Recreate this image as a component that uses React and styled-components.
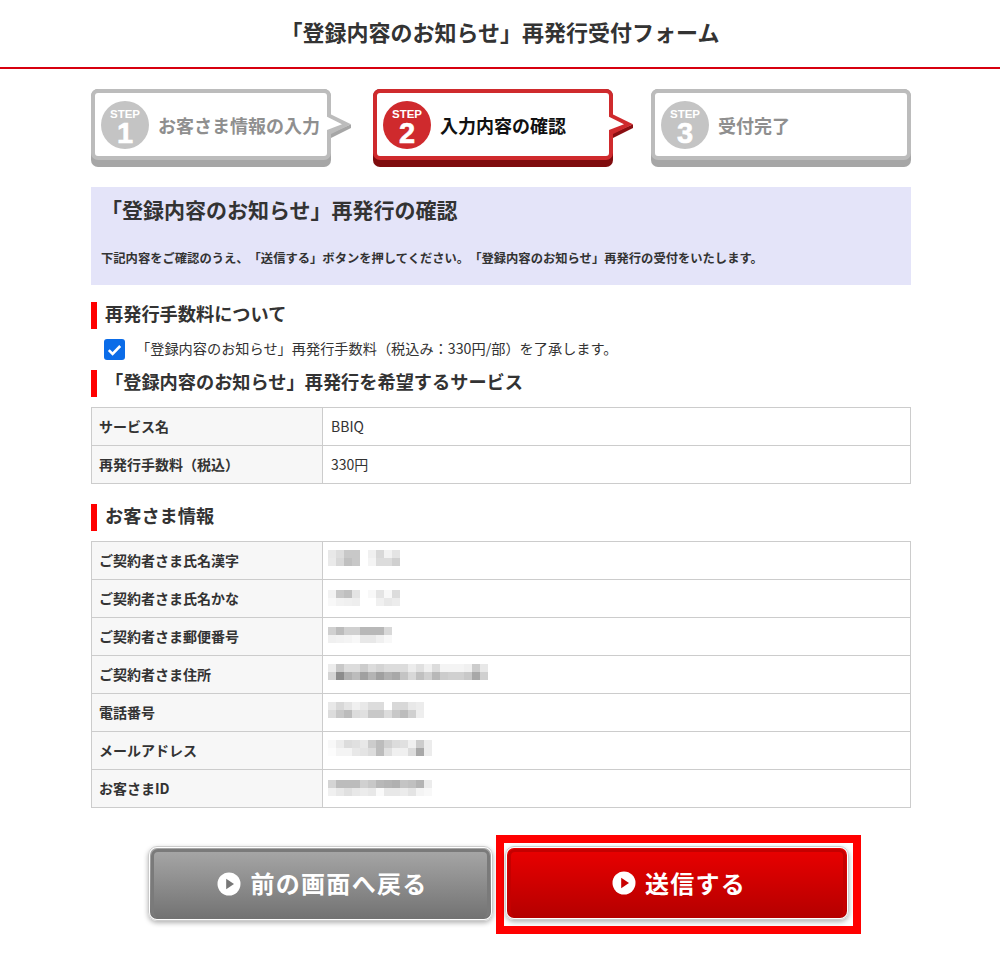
import React from "react";
import styled, { createGlobalStyle } from "styled-components";

const Global = createGlobalStyle`
  html, body { margin: 0; padding: 0; background: #fff; }
  body { font-family: "Noto Sans CJK JP", "Liberation Sans", sans-serif; color: #333; text-spacing-trim: space-all; font-feature-settings: "chws" 0; }
`;

const Header = styled.header`
  height: 67px;
  border-bottom: 2px solid #d7000f;
  display: flex;
  align-items: center;
  justify-content: center;
  padding-bottom: 0;
`;
const Title = styled.h1`
  margin: 0 0 5px;
  font-size: 22px;
  font-weight: 700;
  color: #333;
  line-height: 1;
`;
const Main = styled.main`
  width: 820px;
  margin: 20px 0 0 91px;
`;
const Steps = styled.ol`
  display: flex;
  margin: 0;
  padding: 0;
  list-style: none;
`;
const Step = styled.li`
  position: relative;
  width: ${(p) => (p.$last ? 260 : 240)}px;
  height: 78px;
  margin-left: ${(p) => p.$gap}px;
  margin-right: ${(p) => (p.$last ? 0 : 20)}px;
  box-sizing: border-box;
  background: ${(p) => (p.$active ? "#7f0c0e" : "#a6a6a6")};
  border-radius: 7px;
`;
const StepFace = styled.div`
  box-sizing: border-box;
  height: 71px;
  border: 4px solid ${(p) => (p.$active ? "#cf2a2d" : "#bcbcbc")};
  border-radius: 7px;
  background: #fff;
  display: flex;
  align-items: center;
  padding-left: 6px;
  gap: 9px;
`;
const Badge = styled.div`
  width: 48px;
  height: 48px;
  border-radius: 50%;
  background: ${(p) => (p.$active ? "#cf2a2d" : "#c4c4c4")};
  color: #fff;
  display: flex;
  flex-direction: column;
  align-items: center;
  font-family: "Liberation Sans", sans-serif;
  font-weight: 700;
  flex: none;
`;
const BadgeTop = styled.span`
  font-size: 11.5px;
  line-height: 10px;
  margin-top: 8px;
`;
const BadgeNum = styled.span`
  font-size: 29px;
  line-height: 24px;
  margin-top: 2px;
  -webkit-text-stroke: 0.6px #fff;
`;
const StepLabel = styled.span`
  font-size: 18px;
  font-weight: 700;
  color: ${(p) => (p.$active ? "#111" : "#8f8f8f")};
  line-height: 1;
  margin-top: 0;
`;
const Arrow = styled.svg`
  position: absolute;
  left: 236px;
  top: 20px;
  width: 26px;
  height: 44px;
`;
const Intro = styled.section`
  margin-top: 20px;
  height: 98px;
  box-sizing: border-box;
  background: #e4e4f9;
  padding: 10px 10px 0;
`;
const IntroTitle = styled.h2`
  margin: 0;
  font-size: 21px;
  line-height: 24px;
  font-weight: 700;
  color: #333;
`;
const IntroText = styled.p`
  margin: 28px 0 0;
  font-size: 12.3px;
  line-height: 18px;
  font-weight: 700;
  color: #333;
`;
const SectionHead = styled.h3`
  margin: ${(p) => p.$top}px 0 0;
  height: 27px;
  border-left: 6px solid #f00;
  padding-left: 8px;
  font-size: 18.2px;
  line-height: 22px;
  font-weight: 700;
  color: #333;
`;
const AgreeRow = styled.label`
  display: flex;
  align-items: center;
  height: 21px;
  margin: 10px 0 0 13px;
  color: #333;
`;
const AgreeText = styled.span`
  font-size: 14.2px;
  line-height: 17px;
  margin-bottom: 3px;
`;
const Check = styled.span`
  width: 21px;
  height: 21px;
  border-radius: 3px;
  background: #0b6ce8;
  display: flex;
  align-items: center;
  justify-content: center;
  margin-right: 11px;
  flex: none;
`;
const Table = styled.table`
  width: 820px;
  margin-top: 10px;
  border-collapse: collapse;
  table-layout: fixed;
  font-size: 14px;
`;
const Th = styled.th`
  width: 216px;
  height: 35px;
  padding: 0 7px 2px;
  background: #f7f7f7;
  border: 1px solid #ccc;
  text-align: left;
  font-weight: 700;
  color: #333;
`;
const Td = styled.td`
  height: 35px;
  padding: 0 8px 2px;
  border: 1px solid #ccc;
  color: #333;
  vertical-align: middle;
`;
const Mosaic = styled.svg`
  display: block;
  margin: 0 0 -2px -3px;
`;
const Buttons = styled.div`
  display: flex;
  align-items: flex-start;
  margin-top: 27px;
  margin-left: 57px;
`;
const BackSlot = styled.div`
  padding-top: 11px;
`;
const Button = styled.button`
  box-sizing: border-box;
  width: ${(p) => p.$w}px;
  height: ${(p) => p.$h}px;
  border: 2px solid #fff;
  outline: 1px solid #ccc;
  outline-offset: -1px;
  border-radius: 9px;
  box-shadow: 0 2px 5px rgba(0, 0, 0, 0.3);
  background: ${(p) =>
    p.$red
      ? "linear-gradient(#ea0000, #b40000)"
      : "linear-gradient(#a8a8a8, #727272)"};
  display: flex;
  align-items: center;
  justify-content: center;
  gap: 9px;
  color: #fff;
  font: 700 24px "Noto Sans CJK JP", sans-serif;
  letter-spacing: 1.3px;
  padding: 0 0 0 4px;
  position: relative;
  &::before {
    content: "";
    position: absolute;
    inset: 1px;
    border: 3px solid ${(p) => (p.$red ? "#c40000" : "#7a7a7a")};
    border-bottom-width: 0;
    border-radius: 7px;
    pointer-events: none;
  }
`;
const ButtonLabel = styled.span`
  line-height: 30px;
  margin-top: -1px;
`;
const SendFrame = styled.div`
  border: 8px solid #f00;
  padding: 3px 4px 6px 1px;
  margin-left: 3px;
  background: #fff;
`;

const mosaics = [
  [1, [["e8","dd","c8","c8",0,"f0","d8","f2","e4"],["ea","d8","c0","c8",0,"f4","dc","dc","d0"]], 3],
  [2, [["f2","c8","c0","e4",0,"f8","e4","f8","dc"],["f8","f2","f0","ee",0,0,"f0","e8","ec"]], 5],
  [3, [["d0","bc","d0","d0","b8","b8","b8","d8"],["f0","f2","f4","f8","e8","e8","f0","f8"]], 4],
  [4, [["ec","c8","dc","dc","cc","dc","d4","dc","dc","dc","ec","e0","f0","dc","f4","f4","f4","f0","cc","e8"],["d4","8c","b0","bc","a0","b4","a0","b0","a8","c4","d8","c0","d0","b8","cc","d0","d0","c8","a8","d0"]], 3],
  [5, [["e8","d8","e4","f0","e8","dc","dc",0,"d8","d8","e8","ec"],["dc","c8","bc","dc","e0","c8","c8","dc","c8","bc","d0","ee"]], 3],
  [6, [["f8","ec","dc","e0","e8","cc","bc","d0","dc","e0","f0","cc","ec"],["fc","f4","f4","e8","e4","dc","bc","e0","f0","f0","dc","a8","ec"]], 3],
  [7, [["d4","bc","bc","bc","d0","c8","b8","b4","b0","c4","c0","b4","ec"],["f0","e8","e0","e8","ec","e8","fa","e8","e8","ec","e4","f4","f8"]], 5],
];

function Blur({ rows, top }) {
  return (
    <Mosaic width="170" height="28" viewBox="0 0 170 28">
      {rows.flatMap((r, y) =>
        r.map((c, x) =>
          c ? (
            <rect key={`${x}-${y}`} x={x * 8} y={top + y * 8} width="8" height="8" fill={`#${c}${c}${c}`} />
          ) : null
        )
      )}
    </Mosaic>
  );
}

function Play({ tone }) {
  return (
    <svg width="24" height="24" viewBox="0 0 24 24">
      <circle cx="12" cy="12" r="11.5" fill="#fff" />
      <path d="M9.2 6.8 L17 12 L9.2 17.2 Z" fill={tone} />
    </svg>
  );
}

function StepItem({ n, label, active, gap, last }) {
  const face = active ? "#cf2a2d" : "#bcbcbc";
  const side = active ? "#8a0f12" : "#a6a6a6";
  return (
    <Step $active={active} $gap={gap} $last={last}>
      <StepFace $active={active}>
        <Badge $active={active}>
          <BadgeTop>STEP</BadgeTop>
          <BadgeNum>{n}</BadgeNum>
        </Badge>
        <StepLabel $active={active}>{label}</StepLabel>
      </StepFace>
      {!last && (
        <Arrow viewBox="0 0 26 44">
          <path d="M4 24 L24 15.3 L24 19 L4 29 Z" fill={side} />
          <path d="M0 3.5 L24 15.3 L0 27 Z" fill={face} />
          <path d="M0 7.7 L15 15.3 L0 21 Z" fill="#fff" />
        </Arrow>
      )}
    </Step>
  );
}

export default function App() {
  const people = [
    "ご契約者さま氏名漢字",
    "ご契約者さま氏名かな",
    "ご契約者さま郵便番号",
    "ご契約者さま住所",
    "電話番号",
    "メールアドレス",
    "お客さまID",
  ];
  return (
    <>
      <Global />
      <Header>
        <Title>「登録内容のお知らせ」再発行受付フォーム</Title>
      </Header>
      <Main>
        <Steps>
          <StepItem n="1" label="お客さま情報の入力" gap={0} />
          <StepItem n="2" label="入力内容の確認" active gap={22} />
          <StepItem n="3" label="受付完了" gap={18} last />
        </Steps>
        <Intro>
          <IntroTitle>「登録内容のお知らせ」再発行の確認</IntroTitle>
          <IntroText>下記内容をご確認のうえ、「送信する」ボタンを押してください。「登録内容のお知らせ」再発行の受付をいたします。</IntroText>
        </Intro>
        <SectionHead $top={17}>再発行手数料について</SectionHead>
        <AgreeRow>
          <Check>
            <svg width="15" height="12" viewBox="0 0 15 12">
              <path d="M1.8 6.2 L5.6 10 L13.2 2" fill="none" stroke="#fff" strokeWidth="2.6" />
            </svg>
          </Check>
          <AgreeText>「登録内容のお知らせ」再発行手数料（税込み：330円/部）を了承します。</AgreeText>
        </AgreeRow>
        <SectionHead $top={10}>「登録内容のお知らせ」再発行を希望するサービス</SectionHead>
        <Table>
          <tbody>
            <tr><Th>サービス名</Th><Td>BBIQ</Td></tr>
            <tr><Th>再発行手数料（税込）</Th><Td>330円</Td></tr>
          </tbody>
        </Table>
        <SectionHead $top={20}>お客さま情報</SectionHead>
        <Table>
          <tbody>
            {people.map((p, i) => (
              <tr key={p}>
                <Th>{p}</Th>
                <Td><Blur rows={mosaics[i][1]} top={mosaics[i][2]} /></Td>
              </tr>
            ))}
          </tbody>
        </Table>
        <Buttons>
          <BackSlot>
            <Button $w={345} $h={75}><Play tone="#777" /><ButtonLabel>前の画面へ戻る</ButtonLabel></Button>
          </BackSlot>
          <SendFrame>
            <Button $w={344} $h={74} $red><Play tone="#c80000" /><ButtonLabel>送信する</ButtonLabel></Button>
          </SendFrame>
        </Buttons>
      </Main>
    </>
  );
}
